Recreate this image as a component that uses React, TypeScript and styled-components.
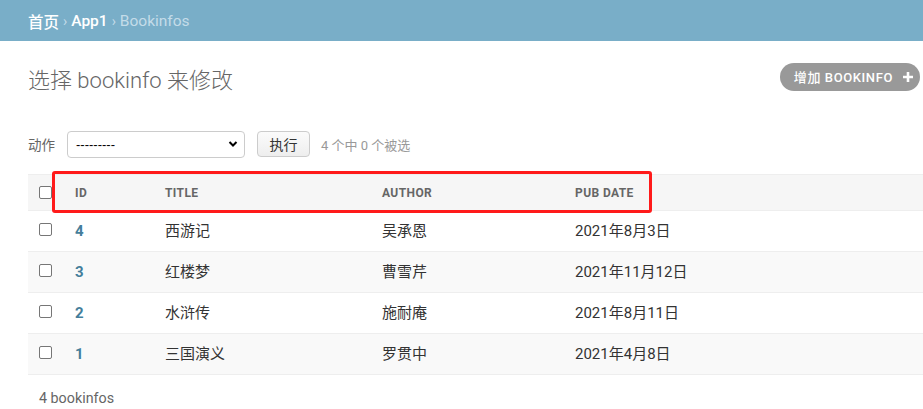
import React from "react";
import styled, { createGlobalStyle } from "styled-components";

const Global = createGlobalStyle`
  html, body { margin: 0; padding: 0; background: #fff; }
  body {
    font-family: Roboto, "Noto Sans CJK SC", "Liberation Sans", sans-serif;
    color: #333;
    font-size: 14px;
    overflow: hidden;
  }
`;

const Page = styled.div`
  width: 923px;
  position: relative;
`;

const Breadcrumbs = styled.div`
  height: 41px;
  background: #79aec8;
  display: flex;
  align-items: center;
  padding-left: 28px;
  font-size: 15.5px;
  color: #fff;
  gap: 4px;
`;

const Crumb = styled.span<{ $current?: boolean }>`
  color: ${(p) => (p.$current ? "#c4dce8" : "#fff")};
  font-weight: ${(p) => (p.$current ? 400 : 500)};
`;

const Sep = styled.span`
  color: #c4dce8;
  font-size: 14px;
`;

const Content = styled.div`
  padding: 0 0 0 28px;
`;

const TitleRow = styled.div`
  display: flex;
  align-items: center;
  justify-content: space-between;
  height: 73px;
`;

const Title = styled.h1`
  margin: 1px 0 0 0;
  font-size: 22px;
  font-weight: 300;
  color: #666;
`;

const AddButton = styled.a`
  display: flex;
  align-items: center;
  gap: 9px;
  height: 28px;
  box-sizing: border-box;
  padding: 0 6px 0 14px;
  margin-right: 3px;
  margin-top: -2px;
  border-radius: 15px;
  background: #999;
  color: #fff;
  font-size: 13px;
  font-weight: 500;
  letter-spacing: 0.6px;
  text-transform: uppercase;
  white-space: nowrap;
`;

const Actions = styled.div`
  display: flex;
  align-items: center;
  margin-top: 16px;
  height: 28px;
  font-size: 13.5px;
  color: #666;
`;

const ActionLabel = styled.span`
  margin-right: 12px;
`;

const Select = styled.div`
  width: 178px;
  height: 27px;
  box-sizing: border-box;
  border: 1px solid #ccc;
  border-radius: 4px;
  display: flex;
  align-items: center;
  justify-content: space-between;
  padding: 0 6px 0 8px;
  color: #000;
  font-family: "Liberation Sans", Arial, sans-serif;
  font-size: 13px;
  background: #fff;
`;

const GoButton = styled.button`
  margin-left: 12px;
  width: 53px;
  height: 26px;
  box-sizing: border-box;
  border: 1px solid #ccc;
  border-radius: 4px;
  background: linear-gradient(#fbfbfb, #eee);
  color: #333;
  font-size: 14px;
  font-family: "Noto Sans CJK SC", sans-serif;
  padding: 0;
`;

const Counter = styled.span`
  margin-left: 11px;
  color: #999;
  font-size: 13px;
`;

const Table = styled.div`
  margin-top: 16px;
  border-top: 1px solid #eee;
  display: grid;
  grid-template-columns: 47px 90px 217px 193px 1fr;
`;

const Cell = styled.div<{ $head?: boolean; $alt?: boolean }>`
  box-sizing: border-box;
  height: ${(p) => (p.$head ? "36px" : "41px")};
  display: flex;
  align-items: ${(p) => (p.$head ? "center" : "flex-start")};
  padding-top: ${(p) => (p.$head ? "0" : "10px")};
  background: ${(p) => (p.$head ? "#f6f6f6" : p.$alt ? "#f9f9f9" : "#fff")};
  border-bottom: 1px solid #eee;
  font-size: ${(p) => (p.$head ? "12px" : "15px")};
  line-height: ${(p) => (p.$head ? "normal" : "20px")};
  font-weight: ${(p) => (p.$head ? 700 : 400)};
  color: ${(p) => (p.$head ? "#666" : "#333")};
  text-transform: uppercase;
  letter-spacing: ${(p) => (p.$head ? "0.4px" : "0")};
  white-space: nowrap;
`;

const CheckCell = styled(Cell)`
  padding-left: 11px;
  padding-top: ${(p) => (p.$head ? "0" : "12px")};
`;

const Checkbox = styled.span`
  display: block;
  width: 13px;
  height: 13px;
  box-sizing: border-box;
  border: 1px solid #767676;
  border-radius: 2px;
  background: #fff;
`;

const IdLink = styled.a`
  color: #447e9b;
  font-weight: 700;
  font-size: 15px;
`;

const Footer = styled.p`
  margin: 15px 0 0 11px;
  font-size: 14.3px;
  color: #666;
`;

const Highlight = styled.div`
  position: absolute;
  left: 52px;
  top: 171px;
  width: 600px;
  height: 42px;
  box-sizing: border-box;
  border: 3px solid #ff1a1a;
  border-radius: 3px;
  pointer-events: none;
`;

const rows = [
  { id: "4", title: "西游记", author: "吴承恩", date: "2021年8月3日" },
  { id: "3", title: "红楼梦", author: "曹雪芹", date: "2021年11月12日" },
  { id: "2", title: "水浒传", author: "施耐庵", date: "2021年8月11日" },
  { id: "1", title: "三国演义", author: "罗贯中", date: "2021年4月8日" },
];

export default function App() {
  return (
    <Page>
      <Global />
      <Breadcrumbs>
        <Crumb>首页</Crumb>
        <Sep>›</Sep>
        <Crumb>App1</Crumb>
        <Sep>›</Sep>
        <Crumb $current>Bookinfos</Crumb>
      </Breadcrumbs>
      <Content>
        <TitleRow>
          <Title>选择 bookinfo 来修改</Title>
          <AddButton>
            增加 bookinfo
            <svg width="12" height="12" viewBox="0 0 12 12">
              <path d="M6 1v10M1 6h10" stroke="#fff" strokeWidth="2.6" />
            </svg>
          </AddButton>
        </TitleRow>
        <Actions>
          <ActionLabel>动作</ActionLabel>
          <Select>
            <span>---------</span>
            <svg width="10" height="8" viewBox="0 0 10 8">
              <path d="M1.5 2l3.5 3.5L8.5 2" stroke="#000" strokeWidth="2" fill="none" />
            </svg>
          </Select>
          <GoButton>执行</GoButton>
          <Counter>4 个中 0 个被选</Counter>
        </Actions>
        <Table>
          <CheckCell $head>
            <Checkbox />
          </CheckCell>
          <Cell $head>Id</Cell>
          <Cell $head>Title</Cell>
          <Cell $head>Author</Cell>
          <Cell $head>Pub date</Cell>
          {rows.map((r, i) => (
            <React.Fragment key={r.id}>
              <CheckCell $alt={i % 2 === 1}>
                <Checkbox />
              </CheckCell>
              <Cell $alt={i % 2 === 1}>
                <IdLink>{r.id}</IdLink>
              </Cell>
              <Cell $alt={i % 2 === 1}>{r.title}</Cell>
              <Cell $alt={i % 2 === 1}>{r.author}</Cell>
              <Cell $alt={i % 2 === 1}>{r.date}</Cell>
            </React.Fragment>
          ))}
        </Table>
        <Footer>4 bookinfos</Footer>
      </Content>
      <Highlight />
    </Page>
  );
}
